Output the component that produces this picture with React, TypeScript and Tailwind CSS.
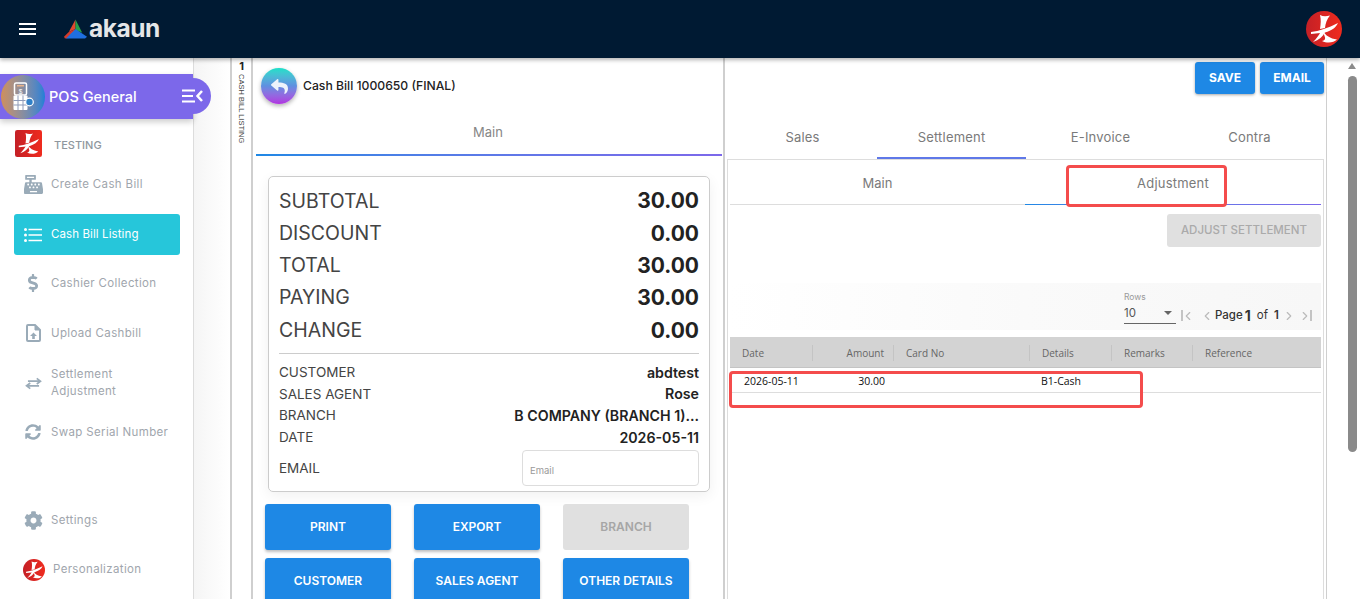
import { ReactNode } from 'react';
import { FaCashRegister, FaCog, FaDollarSign, FaReply, FaSyncAlt } from 'react-icons/fa';
import { ChevronLeft, ChevronRight } from 'lucide-react';

const POP = "font-['Inter','Liberation_Sans',sans-serif]";

// White brush mark on red, used for the company logo
function BrandMark({ round, className }: { round?: boolean; className: string }) {
  return (
    <svg viewBox="0 0 36 36" className={className}>
      <defs>
        <linearGradient id={round ? 'brandR' : 'brandS'} x1="0" y1="0" x2="1" y2="0">
          <stop offset="0" stopColor="#c42026" />
          <stop offset="1" stopColor="#ef2b1e" />
        </linearGradient>
      </defs>
      {round ? (
        <circle cx="18" cy="18" r="18" fill="url(#brandR)" />
      ) : (
        <rect width="36" height="36" rx="3" fill="url(#brandS)" />
      )}
      <g fill="#fff">
        <path d="M14 4c3 1.500 6 1.500 10 .5-3 3.500-4.500 7.500-5 12.500l-5 1c.8-5 1.200-9.500 0-14z" />
        <path d="M5 21c8-1 17-4 27-9-2 4.500-6 7.500-13 9.500l-14 1.500z" />
        <path d="M15 20l4 1c-2 4.500-6 8-12 10 3-3 6-6.500 8-11z" />
        <path d="M17 20c2.500 4.500 7 7.500 14 8.500-3.500 3.500-10 4-15 1.500 2.500-.5 3.500-2 3-3.500-.5-2-1.500-4-2-6.500z" />
      </g>
    </svg>
  );
}

function AkaunLogo() {
  return (
    <div className="flex items-center ml-[28px]">
      <svg viewBox="0 0 24 21" className="w-[23px] h-[21px]">
        <path d="M12 0 L5 13 L12 10 Z" fill="#e0482e" />
        <path d="M5 13 L0 18 L1 20 L8 19 L12 10 Z" fill="#d23a2a" />
        <path d="M12 0 L12 11 L19 14 Z" fill="#27a04a" />
        <path d="M12 10 L24 18 L22 20 L2 20 Z" fill="#1f6fe0" />
      </svg>
      <span className={`${POP} text-[24.500px] font-bold text-[#e4e6e8] ml-[2px] leading-none tracking-[-0.5px] -mt-[2px]`}>akaun</span>
    </div>
  );
}

function NavItem({ icon, h, children }: { icon: ReactNode; h: string; children: ReactNode }) {
  return (
    <div className={`flex items-center ${h}`}>
      <div className="w-[51px] flex justify-center pl-[15px] text-[#9aabb8] shrink-0">{icon}</div>
      <span className={`${POP} text-[11.5px] leading-[17px] text-[#9fa6ad] tracking-[0.35px]`}>{children}</span>
    </div>
  );
}

function Sidebar() {
  return (
    <aside className="w-[194px] shrink-0 bg-white border-r border-[#dcdcdc] relative">
      {/* purple module band */}
      <div className="mt-[16px] h-[45px] bg-[#7c68ea] flex items-center relative shadow-[0_3px_6px_rgba(0,0,0,0.2)]">
        <div className="w-[44px] h-[44px] rounded-full ml-[1px] bg-gradient-to-r from-[#cf8f5a] to-[#1e7fd6] flex items-center justify-center shrink-0">
          <svg viewBox="0 0 22 30" className="w-[22px] h-[30px]">
            <rect x="2.500" y="1" width="12" height="12" rx="1.500" fill="none" stroke="#fff" strokeWidth="1.500" />
            <rect x="5" y="3" width="7" height="1.500" fill="#e8b48c" />
            <text x="8.500" y="11.500" fontSize="6.500" fill="#fff" textAnchor="middle" fontFamily="Liberation Sans">$</text>
            <rect x="1.500" y="13.500" width="14" height="14.500" rx="1" fill="#fff" />
            <path d="M1.500 18.500h14M1.500 23h14M6 13.500v14.500M11 13.500v14.500" stroke="#8f9bb8" strokeWidth="1" />
            <circle cx="17.500" cy="20" r="3.800" fill="#2f80c8" stroke="#fff" strokeWidth="1.200" />
          </svg>
        </div>
        <span className={`${POP} text-[14.500px] text-white ml-[4px] font-medium`}>POS General</span>
        <div className="absolute left-[175px] top-[4px] w-[36px] h-[36px] rounded-r-full bg-[#7c68ea] flex items-center pl-[7px]">
          <svg viewBox="0 0 21 14" className="w-[21px] h-[14px]">
            <path d="M0 1.500h13M0 7h11M0 12.500h13" stroke="#fff" strokeWidth="2" />
            <path d="M20 2 L15.500 7 L20 12" stroke="#fff" strokeWidth="2.500" fill="none" />
          </svg>
        </div>
      </div>

      <div className="flex items-center h-[27px] mt-[11px] pl-[15px]">
        <BrandMark className="w-[27px] h-[27px] shrink-0" />
        <span className={`${POP} text-[11px] text-[#8f979e] ml-[12px] mt-[3px] font-medium`}>TESTING</span>
      </div>

      <div className="mt-[13px]">
        <NavItem h="h-[28px]" icon={<FaCashRegister size={19} />}>Create Cash Bill</NavItem>
      </div>

      <div className="mt-[16px] ml-[14px] w-[166px] h-[41px] bg-[#26c6da] rounded-[3px] flex items-center text-white">
        <svg viewBox="0 0 18 14" className="w-[18px] h-[14px] ml-[10px] shrink-0">
          <path d="M4.500 1.500h13.500M4.500 7h13.500M4.500 12.500h13.500" stroke="#fff" strokeWidth="1.500" />
          <circle cx="1.500" cy="1.500" r="1.500" fill="#fff" />
          <circle cx="1.500" cy="7" r="1.500" fill="#fff" />
          <circle cx="1.500" cy="12.500" r="1.500" fill="#fff" />
        </svg>
        <span className={`${POP} text-[11.5px] ml-[9px] tracking-[0.1px]`}>Cash Bill Listing</span>
      </div>

      <div className="mt-[14px]">
        <NavItem h="h-[28px]" icon={<FaDollarSign size={18} />}>Cashier Collection</NavItem>
      </div>
      <div className="mt-[22px]">
        <NavItem
          h="h-[28px]"
          icon={
            <svg viewBox="0 0 15 18" className="w-[15px] h-[18px]">
              <path d="M1 2a1 1 0 0 1 1-1h7l5 5v10a1 1 0 0 1-1 1H2a1 1 0 0 1-1-1z" fill="none" stroke="currentColor" strokeWidth="2" />
              <path d="M9 1v5h5" fill="currentColor" stroke="currentColor" strokeWidth="1" />
              <path d="M7.500 8.500 L11 12h-2.200v3h-2.600v-3H4z" fill="currentColor" />
            </svg>
          }
        >
          Upload Cashbill
        </NavItem>
      </div>
      <div className="mt-[16px]">
        <NavItem
          h="h-[40px]"
          icon={
            <svg viewBox="0 0 18 14" className="w-[17px] h-[13px]">
              <path d="M3 4.500h13M12.500 1.500 L16.500 4.500 L12.500 7.500 M15 9.500h-13M5.500 6.500 L1.500 9.500 L5.500 12.500" stroke="currentColor" strokeWidth="1.800" fill="none" />
            </svg>
          }
        >
          Settlement
          <br />
          Adjustment
        </NavItem>
      </div>
      <div className="mt-[15px]">
        <NavItem h="h-[28px]" icon={<FaSyncAlt size={16} />}>Swap Serial Number</NavItem>
      </div>

      <div className="mt-[60px]">
        <NavItem h="h-[28px]" icon={<FaCog size={19} />}>Settings</NavItem>
      </div>
      <div className="flex items-center h-[28px] mt-[22px] pl-[23px]">
        <BrandMark round className="w-[22px] h-[22px] shrink-0" />
        <span className={`${POP} text-[11.5px] text-[#9fa6ad] ml-[8px] tracking-[0.35px]`}>Personalization</span>
      </div>
    </aside>
  );
}

function SummaryRow({ label, value }: { label: string; value: string }) {
  return (
    <div className="flex justify-between items-center h-[32.300px]">
      <span className={`${POP} text-[19.500px] text-[#444]`}>{label}</span>
      <span className={`${POP} text-[21px] font-bold text-[#222]`}>{value}</span>
    </div>
  );
}

function InfoRow({ label, value, h }: { label: string; value: string; h: string }) {
  return (
    <div className={`flex justify-between items-center ${h}`}>
      <span className={`${POP} text-[13.500px] text-[#444]`}>{label}</span>
      <span className={`${POP} text-[14.200px] font-semibold text-[#222]`}>{value}</span>
    </div>
  );
}

function ActionButton({ children, disabled }: { children: ReactNode; disabled?: boolean }) {
  return (
    <button
      className={`${POP} w-[126px] h-[46px] rounded-[3px] text-[12px] font-semibold ${
        disabled ? 'bg-[#e0e0e0] text-[#a6a6a6]' : 'bg-[#1e88e5] text-white shadow-[0_2px_3px_rgba(0,0,0,0.25)]'
      }`}
    >
      {children}
    </button>
  );
}

function LeftPanel() {
  return (
    <section className="w-[472px] shrink-0 border-r-2 border-[#cfcfcf] bg-white flex flex-col overflow-hidden">
      <div className="h-[54px] shrink-0 flex items-start pt-[10px] pl-[8px]">
        <div className="w-[36px] h-[36px] rounded-full bg-gradient-to-b from-[#17e0c8] via-[#5f8fe0] to-[#b030e0] flex items-center justify-center shadow-[0_2px_4px_rgba(0,0,0,0.3)]">
          <FaReply size={17} className="text-[#eef3fb]" />
        </div>
        <span className={`${POP} text-[12.200px] font-medium text-[#222] ml-[6px] mt-[9px]`}>Cash Bill 1000650 (FINAL)</span>
      </div>
      <div className={`${POP} h-[42px] shrink-0 text-center text-[13px] text-[#868686] pt-[11px] mx-[3px]`}>Main</div>
      <div className="h-[2px] shrink-0 ml-[3px] mr-[1px] bg-gradient-to-r from-[#1e88e5] to-[#7c68ea]" />

      <div className="mt-[20px] ml-[15px] w-[442px] h-[316px] border border-[#cccccc] rounded-[5px] px-[10px] pt-[8px] shadow-[0_4px_14px_rgba(0,0,0,0.06)] shrink-0">
        <SummaryRow label="SUBTOTAL" value="30.00" />
        <SummaryRow label="DISCOUNT" value="0.00" />
        <SummaryRow label="TOTAL" value="30.00" />
        <SummaryRow label="PAYING" value="30.00" />
        <SummaryRow label="CHANGE" value="0.00" />
        <div className="h-px bg-[#cccccc] mt-[7px] mb-[7px]" />
        <InfoRow label="CUSTOMER" value="abdtest" h="h-[22px]" />
        <InfoRow label="SALES AGENT" value="Rose" h="h-[21px]" />
        <InfoRow label="BRANCH" value="B COMPANY (BRANCH 1)..." h="h-[22px]" />
        <InfoRow label="DATE" value="2026-05-11" h="h-[22px]" />
        <div className="flex justify-between items-center mt-[2px]">
          <span className={`${POP} text-[13.500px] text-[#444]`}>EMAIL</span>
          <div className={`${POP} w-[177px] h-[36px] border border-[#dddddd] rounded-[4px] text-[9.500px] text-[#9a9a9a] pl-[7px] pt-[13px]`}>Email</div>
        </div>
      </div>

      <div className="mt-[12px] ml-[12px] grid grid-cols-[126px_126px_126px] gap-x-[23px] gap-y-[8px] shrink-0">
        <ActionButton>PRINT</ActionButton>
        <ActionButton>EXPORT</ActionButton>
        <ActionButton disabled>BRANCH</ActionButton>
        <ActionButton>CUSTOMER</ActionButton>
        <ActionButton>SALES AGENT</ActionButton>
        <ActionButton>OTHER DETAILS</ActionButton>
      </div>
    </section>
  );
}

function TopTab({ label, active }: { label: string; active?: boolean }) {
  return (
    <div className={`${POP} h-[43px] w-[149px] text-center text-[13px] tracking-[0.2px] text-[#7a7a7a] pt-[12px] border-b-2 ${active ? 'border-[#5f78e8]' : 'border-transparent'}`}>
      {label}
    </div>
  );
}

const columns = ['Date', 'Amount', 'Card No', 'Details', 'Remarks', 'Reference'];

function RightPanel() {
  return (
    <section className="w-[602px] shrink-0 border-r border-[#cfcfcf] bg-white relative overflow-hidden">
      <div className="flex justify-end gap-[5px] pt-[4px] pr-[2px] h-[41px]">
        <button className={`${POP} w-[60px] h-[32px] bg-[#1e88e5] text-white text-[12px] font-bold rounded-[3px] shadow-[0_1px_3px_rgba(0,0,0,0.35)]`}>SAVE</button>
        <button className={`${POP} w-[64px] h-[32px] bg-[#1e88e5] text-white text-[12px] font-bold rounded-[3px] shadow-[0_1px_3px_rgba(0,0,0,0.35)]`}>EMAIL</button>
      </div>
      <div className="flex ml-[3px] mt-[17px]">
        <TopTab label="Sales" />
        <TopTab label="Settlement" active />
        <TopTab label="E-Invoice" />
        <TopTab label="Contra" />
      </div>
      <div className="ml-[2px] mr-[2px] border border-[#dddddd] border-b-0 h-[440px] px-[2px]">
        <div className="flex">
          <div className={`${POP} w-[295px] h-[45px] text-center text-[13px] text-[#7a7a7a] pt-[14px] border-b border-[#dddddd]`}>Main</div>
          <div className="w-[296px] h-[45px] flex flex-col">
            <div className={`${POP} flex-1 text-center text-[13px] tracking-[0.2px] text-[#7a7a7a] pt-[14px]`}>Adjustment</div>
            <div className="h-[1px] bg-gradient-to-r from-[#1e88e5] to-[#7c68ea]" />
          </div>
        </div>
        <div className="flex justify-end mt-[9px]">
          <div className={`${POP} w-[154px] h-[33px] bg-[#e0e0e0] rounded-[3px] flex items-center justify-center text-[11.500px] font-medium text-[#aaaaaa]`}>ADJUST SETTLEMENT</div>
        </div>
        {/* paginator */}
        <div className="mt-[36px] h-[47px] flex justify-end bg-gradient-to-r from-white via-[#fafafa] to-[#f7f7f7]">
          <div className="flex items-center w-[198px] pl-[1px] relative">
            <div className="w-[52px] border-b border-[#666] mt-[2px]">
              <div className={`${POP} text-[8.500px] text-[#999] leading-[10px]`}>Rows</div>
              <div className={`${POP} text-[11.500px] text-[#555] flex justify-between items-center h-[18px] mt-[3px]`}>
                10
                <span className="w-0 h-0 border-x-[4px] border-x-transparent border-t-[4px] border-t-[#666] mr-[4px] -mt-[2px]" />
              </div>
            </div>
            <div className="flex items-center mt-[18px]">
              <div className="ml-[5px] flex items-center text-[#bbbbbb]">
                <span className="w-[2px] h-[11px] bg-[#c4c4c4] mr-[-2px]" />
                <ChevronLeft size={14} strokeWidth={2} />
              </div>
              <ChevronLeft size={14} strokeWidth={2} className="text-[#bbbbbb] ml-[5px]" />
              <span className={`${POP} text-[11.500px] text-[#333] ml-[1px] font-medium`}>Page</span>
              <span className={`${POP} text-[14px] text-[#333] ml-[2px] font-bold`}>1</span>
              <span className={`${POP} text-[11.500px] text-[#333] ml-[6px]`}>of</span>
              <span className={`${POP} text-[11.500px] text-[#333] ml-[6px] font-semibold`}>1</span>
              <ChevronRight size={14} strokeWidth={2} className="text-[#bbbbbb] ml-[3px]" />
              <div className="ml-[2px] flex items-center text-[#bbbbbb]">
                <ChevronRight size={14} strokeWidth={2} />
                <span className="w-[2px] h-[11px] bg-[#c4c4c4] ml-[-2px]" />
              </div>
            </div>
          </div>
        </div>
        {/* table */}
        <div className="mt-[7px] grid grid-cols-[83px_81px_136px_82px_81px_1fr] h-[31px] bg-[#d3d3d3] border-b border-[#c4c4c4] items-center">
          {columns.map((c, i) => (
            <div
              key={c}
              className={`font-['Open_Sans','Liberation_Sans',sans-serif] text-[10px] text-[#666] h-[16px] leading-[16px] mt-[1px] ${i < 5 ? 'border-r border-[#c4c4c4]' : ''} ${i === 1 ? 'text-right pr-[9px]' : 'pl-[12px]'}`}
            >
              {c}
            </div>
          ))}
        </div>
        <div className="grid grid-cols-[83px_81px_136px_82px_81px_1fr] h-[25px] border-b border-[#dddddd] font-['Open_Sans','Liberation_Sans',sans-serif] text-[10.500px] text-[#111] pt-[5px] leading-[16px]">
          <div className="pl-[14px]">2026-05-11</div>
          <div className="text-right pr-[9px]">30.00</div>
          <div />
          <div className="pl-[11px]">B1-Cash</div>
          <div />
          <div />
        </div>
      </div>

      {/* red callouts on the screenshot */}
      <div className="absolute left-[341px] top-[107px] w-[161px] h-[42px] border-[3px] border-[#f44c4c] rounded-[4px]" />
      <div className="absolute left-[4px] top-[313px] w-[414px] h-[37px] border-[3px] border-[#f44c4c] rounded-[4px]" />
    </section>
  );
}

export default function App() {
  return (
    <div className="w-[1360px] h-[599px] overflow-hidden flex flex-col bg-white">
      <header className="h-[58px] shrink-0 bg-[#001a33] flex items-center justify-between relative z-20 shadow-[0_2px_4px_rgba(0,0,0,0.3)]">
        <div className="flex items-center">
          <div className="ml-[19px] flex flex-col gap-[2.500px] w-[17px]">
            <span className="h-[2.500px] bg-white" />
            <span className="h-[2.500px] bg-white" />
            <span className="h-[2.500px] bg-white" />
          </div>
          <AkaunLogo />
        </div>
        <BrandMark round className="w-[36px] h-[36px] mr-[18px]" />
      </header>
      <div className="flex flex-1 min-h-0">
        <Sidebar />
        <div className="w-[36px] shrink-0 bg-gradient-to-r from-[#f5f5f5] to-white" />
        <div className="w-[23px] shrink-0 border-x-2 border-[#cfcfcf] flex flex-col items-center bg-white">
          <span className={`${POP} text-[11px] font-bold text-[#222] leading-[14px] mt-[1px]`}>1</span>
          <span className="font-['Liberation_Sans',sans-serif] text-[7.500px] text-[#444] [writing-mode:vertical-rl] mt-[1px] leading-none">CASH BILL LISTING</span>
        </div>
        <LeftPanel />
        <RightPanel />
        {/* page scrollbar */}
        <div className="flex-1 bg-white relative">
          <div className="absolute left-[21px] top-[5px] w-0 h-0 border-x-[4.500px] border-x-transparent border-b-[6px] border-b-[#8a8a8a]" />
          <div className="absolute left-[21px] top-[18px] w-[9px] h-[376px] rounded-full bg-[#8a8a8a]" />
        </div>
      </div>
    </div>
  );
}
